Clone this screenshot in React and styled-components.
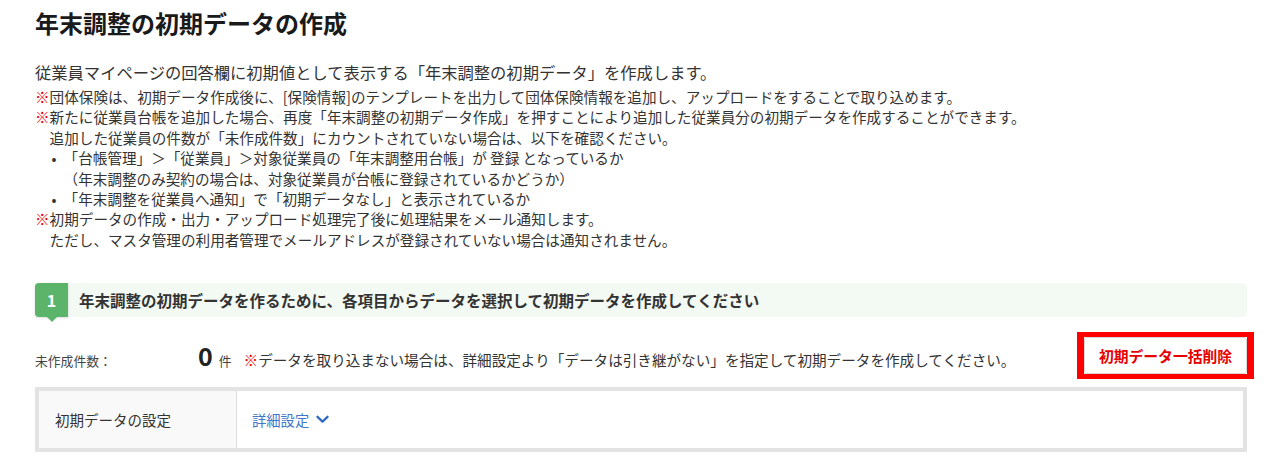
import styled, { createGlobalStyle } from 'styled-components';

const GlobalStyle = createGlobalStyle`
  body {
    margin: 0;
    background: #fff;
    color: #333;
    font-family: "Noto Sans CJK JP", "Noto Sans", sans-serif;
  }
`;

const notes = [
  {
    lines: ['団体保険は、初期データ作成後に、[保険情報]のテンプレートを出力して団体保険情報を追加し、アップロードをすることで取り込めます。'],
  },
  {
    lines: [
      '新たに従業員台帳を追加した場合、再度「年末調整の初期データ作成」を押すことにより追加した従業員分の初期データを作成することができます。',
      '追加した従業員の件数が「未作成件数」にカウントされていない場合は、以下を確認ください。',
    ],
    bullets: [
      ['「台帳管理」＞「従業員」＞対象従業員の「年末調整用台帳」が 登録 となっているか', '（年末調整のみ契約の場合は、対象従業員が台帳に登録されているかどうか）'],
      ['「年末調整を従業員へ通知」で「初期データなし」と表示されているか'],
    ],
  },
  {
    lines: [
      '初期データの作成・出力・アップロード処理完了後に処理結果をメール通知します。',
      'ただし、マスタ管理の利用者管理でメールアドレスが登録されていない場合は通知されません。',
    ],
  },
];

export default function App() {
  return (
    <>
      <GlobalStyle />
      <Page>
        <Title>年末調整の初期データの作成</Title>
        <Lead>従業員マイページの回答欄に初期値として表示する「年末調整の初期データ」を作成します。</Lead>
        <Notes>
          {notes.map((n, i) => (
            <Note key={i}>
              <Mark>※</Mark>
              <NoteBody>
                {n.lines.map((l) => (
                  <div key={l}>{l}</div>
                ))}
                {n.bullets && (
                  <Bullets>
                    {n.bullets.map((b) => (
                      <li key={b[0]}>
                        <Dot>•</Dot>
                        <div>
                          {b.map((t) => (
                            <div key={t}>{t}</div>
                          ))}
                        </div>
                      </li>
                    ))}
                  </Bullets>
                )}
              </NoteBody>
            </Note>
          ))}
        </Notes>

        <StepBar>
          <StepBadge>1</StepBadge>
          <StepText>年末調整の初期データを作るために、各項目からデータを選択して初期データを作成してください</StepText>
        </StepBar>

        <CountRow>
          <CountGroup>
            <CountLabel>未作成件数：</CountLabel>
            <CountValue>0</CountValue>
            <CountUnit>件</CountUnit>
            <CountNote>
              <Mark>※</Mark>データを取り込まない場合は、詳細設定より「データは引き継がない」を指定して初期データを作成してください。
            </CountNote>
          </CountGroup>
          <DeleteFrame>
            <DeleteButton>初期データ一括削除</DeleteButton>
          </DeleteFrame>
        </CountRow>

        <SettingTable>
          <HeadCell>初期データの設定</HeadCell>
          <BodyCell>
            <DetailLink>
              詳細設定
              <svg width="13" height="9" viewBox="0 0 13 9">
                <path d="M1.5 1.8 L6.5 6.6 L11.5 1.8" fill="none" stroke="#2e6bc4" strokeWidth="2.3" strokeLinecap="round" strokeLinejoin="round" />
              </svg>
            </DetailLink>
          </BodyCell>
        </SettingTable>
      </Page>
    </>
  );
}

const Page = styled.div`
  padding: 7px 33px 20px 35px;
`;
const Title = styled.h1`
  margin: 0;
  font-size: 24px;
  line-height: 32px;
  font-weight: bold;
  color: #1a1a1a;
`;
const Lead = styled.p`
  margin: 21px 0 3px;
  font-size: 16.3px;
  line-height: 24px;
  color: #333;
`;
const Notes = styled.div`
  font-size: 14.6px;
  line-height: 20.4px;
  color: #333;
`;
const Note = styled.div`
  display: flex;
`;
const Mark = styled.span`
  flex: none;
  color: #ee0000;
  font-weight: bold;
`;
const NoteBody = styled.div`
  flex: 1;
`;
const Bullets = styled.ul`
  list-style: none;
  margin: 0;
  padding: 0 0 0 2px;
  li {
    display: flex;
  }
`;
const Dot = styled.span`
  width: 12px;
  flex: none;
`;
const StepBar = styled.div`
  display: flex;
  align-items: center;
  height: 34px;
  margin-top: 33px;
  background: #f3faf3;
  border-radius: 5px;
`;
const StepBadge = styled.div`
  position: relative;
  display: flex;
  align-items: center;
  justify-content: center;
  width: 33px;
  align-self: stretch;
  background: #5bb46a;
  color: #fff;
  font-weight: bold;
  font-size: 16px;
  border-radius: 4px 0 0 4px;
  box-shadow: 0 1px 3px rgba(0, 0, 0, 0.15);
  &::after {
    content: '';
    position: absolute;
    left: 12px;
    bottom: -5px;
    border-left: 5px solid transparent;
    border-right: 5px solid transparent;
    border-top: 5px solid #5bb46a;
  }
`;
const StepText = styled.div`
  margin-left: 11px;
  font-size: 15.5px;
  font-weight: bold;
  color: #333;
`;
const CountRow = styled.div`
  display: flex;
  align-items: flex-end;
  justify-content: space-between;
  margin-top: 15px;
`;
const CountGroup = styled.div`
  display: flex;
  align-items: baseline;
  padding-bottom: 9px;
`;
const CountLabel = styled.span`
  width: 163px;
  font-size: 12.8px;
  color: #444;
`;
const CountValue = styled.span`
  font-size: 25px;
  font-weight: bold;
  line-height: 1;
  color: #222;
`;
const CountUnit = styled.span`
  margin: 0 12px 0 6px;
  font-size: 12.8px;
  color: #444;
`;
const CountNote = styled.span`
  font-size: 14.6px;
  line-height: 20px;
  color: #333;
`;
const DeleteFrame = styled.div`
  margin-right: -7px;
  border: solid #ff0000;
  border-width: 5px 7px;
`;
const DeleteButton = styled.button`
  display: block;
  width: 163px;
  height: 37px;
  background: #fff;
  border: 1px solid #d6d6d6;
  border-radius: 3px;
  color: #e60000;
  font-family: "Noto Sans CJK JP", sans-serif;
  font-size: 14.8px;
  font-weight: bold;
  cursor: pointer;
`;
const SettingTable = styled.div`
  display: grid;
  grid-template-columns: 198px 1fr;
  height: 57px;
  margin-top: 8px;
  border: 4px solid #e3e3e3;
`;
const HeadCell = styled.div`
  display: flex;
  align-items: center;
  padding-left: 16px;
  background: #f9f9f9;
  border-right: 1px solid #ddd;
  font-size: 14.5px;
  color: #333;
`;
const BodyCell = styled.div`
  display: flex;
  align-items: center;
  padding-left: 15px;
`;
const DetailLink = styled.a`
  display: flex;
  align-items: center;
  gap: 7px;
  font-size: 14.3px;
  color: #4176c8;
  cursor: pointer;
`;
